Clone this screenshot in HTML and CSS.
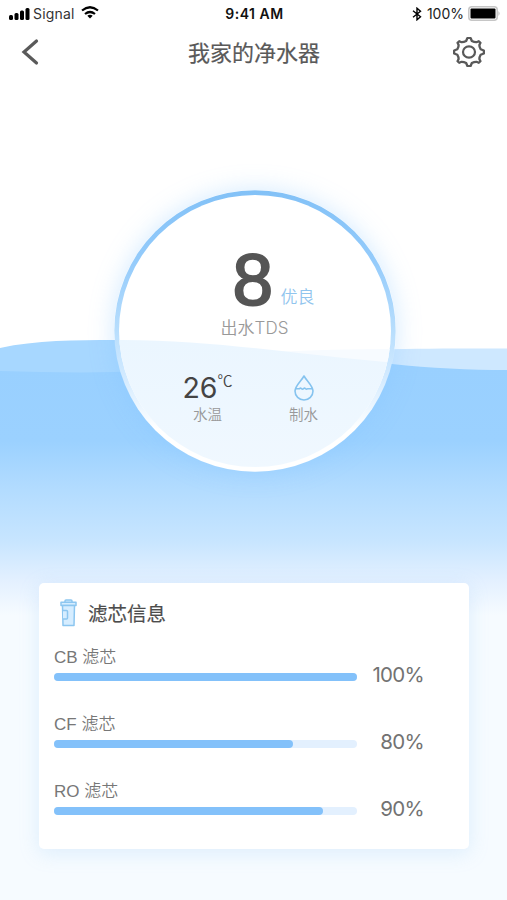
FILE: index.html
```html
<!DOCTYPE html>
<html lang="zh-CN">
<head>
<meta charset="utf-8">
<meta name="viewport" content="width=device-width, initial-scale=1">
<title>我家的净水器</title>
<link rel="stylesheet" href="styles.css">
</head>
<body>
<div class="screen">
  <svg class="water" viewBox="0 0 507 570" preserveAspectRatio="none" aria-hidden="true">
    <defs>
      <linearGradient id="deep" gradientUnits="userSpaceOnUse" x1="0" y1="36" x2="0" y2="285">
        <stop offset="0" stop-color="#99d0ff"/>
        <stop offset=".3" stop-color="#9bd1ff"/>
        <stop offset=".5" stop-color="#b3dcff"/>
        <stop offset=".7" stop-color="#c7e5ff"/>
        <stop offset=".86" stop-color="#e3f0ff"/>
        <stop offset="1" stop-color="#f6fbff"/>
      </linearGradient>
    </defs>
    <path fill="#a7d7ff" d="M0 18C36 10 76 10 114 10C210 10 290 26 392 34L392 60H0Z"/>
    <path fill="#cee8ff" d="M507 18.500C420 18 340 19 290 24L392 60H507Z"/>
    <path fill="url(#deep)" d="M0 41C40 42 76 43 114 42C185 40 230 26 300 23C330 27 360 31 392 34C430 38 470 40 507 40V570H0Z"/>
  </svg>

  <header class="status">
    <div class="status-left">
      <svg width="22" height="13" viewBox="0 0 22 13"><rect x="0" y="8" width="4" height="5" rx="1.500"/><rect x="5.500" y="6" width="4" height="7" rx="1.500"/><rect x="11" y="3.500" width="4" height="9.500" rx="1.500"/><rect x="16.500" y="1" width="4" height="12" rx="1.500"/></svg>
      <span class="carrier">Signal</span>
      <svg class="wifi" width="18" height="13" viewBox="0 0 18 13" fill="none" stroke="#000" stroke-width="2.200"><path d="M1 4.500Q9-2 17 4.500"/><path d="M4 8Q9 4 14 8"/><path d="M6.300 9.800Q9 7.900 11.700 9.800L9 12.500Z" fill="#000" stroke="none"/></svg>
    </div>
    <span class="time">9:41 AM</span>
    <div class="status-right">
      <svg width="10" height="14" viewBox="0 0 10 14" fill="none" stroke="#000" stroke-width="1.400"><path d="M1 3.800L8.500 9.800L5 12.800V1.200L8.500 4.200L1 10.200"/></svg>
      <span class="charge">100%</span>
      <svg width="32" height="15" viewBox="0 0 32 15"><rect x=".8" y=".8" width="28.400" height="13.400" rx="3" fill="#fff" stroke="#c6c6c6" stroke-width="1.500"/><rect x="2.500" y="2.500" width="25" height="10" rx="1" fill="#000"/><path d="M30.400 5Q32.800 7.500 30.400 10Z" fill="#c2c2c2"/></svg>
    </div>
  </header>

  <nav class="nav">
    <svg width="18" height="28" viewBox="0 0 18 28" fill="none" stroke="#5a5a5a" stroke-width="3.200" stroke-linecap="round"><path d="M15.500 3L3 14L15.500 25"/></svg>
    <h1>我家的净水器</h1>
    <svg width="34" height="32" viewBox="-17 -16 34 32" fill="none" stroke="#595959" stroke-width="2.200" stroke-linejoin="round"><ellipse rx="6" ry="5.600"/><path transform="scale(1.060 1)" d="M-1.500-14H1.500L2.700-11Q5-9.700 7-9.800L9.200-10.800L10.800-9.200L9.800-7Q9.700-5 11-2.700L14-1.500V1.500L11 2.700Q9.700 5 9.800 7L10.800 9.200L9.200 10.800L7 9.800Q5 9.700 2.700 11L1.500 14H-1.500L-2.700 11Q-5 9.700-7 9.800L-9.200 10.800L-10.800 9.200L-9.800 7Q-9.700 5-11 2.700L-14 1.500V-1.500L-11-2.700Q-9.700-5-9.800-7L-10.800-9.200L-9.200-10.800L-7-9.800Q-5-9.700-2.700-11Z"/></svg>
  </nav>

  <section class="dial">
    <svg class="ring" viewBox="0 0 282 282" aria-hidden="true">
      <defs>
        <linearGradient id="ringFill" x1="0" y1="0" x2="0" y2="1">
          <stop offset="0" stop-color="#82c1f7"/>
          <stop offset=".25" stop-color="#94cbfb"/>
          <stop offset=".5" stop-color="#b8defd"/>
          <stop offset=".66" stop-color="#d2eaff"/>
          <stop offset=".85" stop-color="#fff"/>
          <stop offset="1" stop-color="#fff"/>
        </linearGradient>
        <linearGradient id="innerWater" x1="0" y1="0" x2="0" y2="1">
          <stop offset="0" stop-color="#ebf6ff"/>
          <stop offset="1" stop-color="#f0f8ff"/>
        </linearGradient>
        <clipPath id="disc"><circle cx="141" cy="141" r="136"/></clipPath>
      </defs>
      <circle cx="141" cy="141" r="140.700" fill="url(#ringFill)"/>
      <g clip-path="url(#disc)">
        <rect width="282" height="282" fill="#fff"/>
        <path fill="#f7fbff" d="M160 162C200 160 240 159 282 159V190H160Z"/>
        <path fill="url(#innerWater)" d="M0 150C95 149 175 164 282 173V282H0Z"/>
      </g>
    </svg>
    <div class="dial-body">
      <div class="reading"><span class="value">8</span><span class="grade">优良</span></div>
      <div class="caption">出水TDS</div>
      <div class="metrics">
        <div class="metric">
          <div class="temp">26<span class="unit">℃</span></div>
          <div class="label">水温</div>
        </div>
        <div class="metric">
          <svg class="drop" width="20" height="26" viewBox="0 0 20 26" fill="none" stroke="#85c3ef" stroke-width="1.600" stroke-linejoin="round"><path d="M10 1C7.500 5.500 1 11 1 16A9 9 0 0 0 19 16C19 11 12.500 5.500 10 1Z"/><path d="M1.500 13.700H5.500Q6.500 12.700 7.500 13.700T9.500 13.700T11.500 13.700T13.500 13.700H18.500"/></svg>
          <div class="label">制水</div>
        </div>
      </div>
    </div>
  </section>

  <section class="card">
    <div class="card-head">
      <svg width="18" height="28" viewBox="0 0 18 28" fill="#d6edff" stroke="#8cc6f0" stroke-width="1.500" stroke-linejoin="round"><path d="M5 3V2Q5 1 6 1H11Q12 1 12 2V3"/><path d="M1 3.200H16V6.500H1Z"/><path d="M2.500 6.500H14.500L14 26.500H3Z"/><path d="M3 11.500H6.500Q7.500 11.500 7.500 12.500V19Q7.500 20 6.500 20H3"/></svg>
      <h2>滤芯信息</h2>
    </div>
    <div class="filter">
      <div class="gauge"><div class="name">CB 滤芯</div><div class="track"><div class="fill" style="width:100%"></div></div></div>
      <div class="percent">100%</div>
    </div>
    <div class="filter">
      <div class="gauge"><div class="name">CF 滤芯</div><div class="track"><div class="fill" style="width:79%"></div></div></div>
      <div class="percent">80%</div>
    </div>
    <div class="filter">
      <div class="gauge"><div class="name">RO 滤芯</div><div class="track"><div class="fill" style="width:88.800%"></div></div></div>
      <div class="percent">90%</div>
    </div>
  </section>
</div>
</body>
</html>
```
FILE: styles.css
```css
* { box-sizing: border-box; }

body {
  margin: 0;
  background: #fff;
  font-family: Inter, "Noto Sans CJK SC", sans-serif;
  color: #595959;
}

.screen {
  position: relative;
  width: 507px;
  height: 900px;
  overflow: hidden;
}

.water {
  position: absolute;
  left: 0;
  top: 330px;
  width: 507px;
  height: 570px;
}

.status {
  position: relative;
  display: grid;
  grid-template-columns: 1fr auto 1fr;
  align-items: center;
  height: 28px;
  padding: 0 7px 0 9px;
  color: #111;
}

.status > * { margin-top: -1px; }

.status-left,
.status-right {
  display: flex;
  align-items: center;
}

.status-right { justify-content: flex-end; }

.carrier {
  margin-left: 2px;
  font-size: 14px;
  letter-spacing: .2px;
  color: #333;
}

.wifi { margin-left: 6px; margin-bottom: 2px; }

.time {
  font-size: 14px;
  font-weight: 600;
  letter-spacing: .5px;
}

.charge {
  margin: 0 4px 0 5px;
  font-size: 14px;
  color: #222;
}

.nav {
  position: relative;
  display: flex;
  align-items: center;
  justify-content: space-between;
  height: 48px;
  padding: 0 21px;
}

.nav h1 {
  margin: 2px 0 0 17px;
  font-size: 22px;
  line-height: 32px;
  font-weight: 400;
  -webkit-text-stroke: .2px #595959;
}

.dial {
  position: relative;
  width: 282px;
  height: 282px;
  margin: 114px 0 0 113.500px;
  border-radius: 50%;
  box-shadow: 0 0 24px rgba(130, 195, 255, .35);
}

.ring {
  position: absolute;
  inset: 0;
  width: 100%;
  height: 100%;
}

.dial-body {
  position: relative;
  display: flex;
  flex-direction: column;
  padding-top: 54px;
}

.reading {
  display: flex;
  align-items: flex-end;
  height: 70px;
  padding-left: 119px;
}

.value {
  width: 45px;
  font-family: "Liberation Sans", sans-serif;
  font-size: 73px;
  line-height: 68px;
  font-weight: 400;
  -webkit-text-stroke: 2px #555;
  color: #555;
}

.grade {
  margin-left: 3px;
  margin-bottom: 5px;
  font-size: 17px;
  line-height: 24px;
  color: #91c5ee;
  font-weight: 350;
}

.caption {
  height: 24px;
  margin-top: 2px;
  font-size: 17px;
  line-height: 24px;
  text-align: center;
  color: #999;
  font-weight: 350;
}

.metrics {
  display: grid;
  grid-template-columns: 96px 96px;
  justify-content: center;
  margin: 30px 0 0 2px;
}

.metric {
  display: flex;
  flex-direction: column;
  align-items: center;
}

.temp {
  display: flex;
  height: 33px;
  padding-top: 2px;
  font-size: 28.500px;
  line-height: 32px;
  color: #444;
}

.unit {
  font-family: "Noto Sans CJK SC", sans-serif;
  font-size: 15px;
  line-height: 16px;
  font-weight: 350;
}

.drop { margin: 5px 0 2px; }

.label {
  font-size: 14.500px;
  line-height: 22px;
  margin-top: 1px;
  color: #999;
  font-weight: 350;
}

.card {
  position: absolute;
  left: 39px;
  top: 583px;
  width: 430px;
  height: 266px;
  padding: 15px 15px 0;
  border-radius: 5px;
  background: #fff;
  box-shadow: 0 4px 20px rgba(130, 190, 240, .22);
}

.card-head {
  display: flex;
  align-items: center;
  height: 30px;
  padding-left: 6px;
  margin-bottom: 18px;
}

.card-head h2 {
  margin: 1px 0 0 10px;
  font-size: 19.500px;
  line-height: 30px;
  font-weight: 400;
  -webkit-text-stroke: .2px #4c4c4c;
  color: #4c4c4c;
}

.filter {
  display: flex;
  height: 67px;
}

.gauge { width: 303px; }

.name {
  height: 27px;
  font-family: "Liberation Sans", "Noto Sans CJK SC", sans-serif;
  font-size: 17px;
  line-height: 24px;
  font-weight: 350;
  color: #777;
}

.track {
  height: 7.500px;
  border-radius: 4px;
  background: #e3f0fe;
}

.fill {
  height: 100%;
  border-radius: 4px;
  background: #83c1fa;
}

.percent {
  width: 67px;
  padding-top: 15px;
  font-size: 20.500px;
  letter-spacing: -.7px;
  line-height: 28px;
  text-align: right;
  color: #727272;
}
```
